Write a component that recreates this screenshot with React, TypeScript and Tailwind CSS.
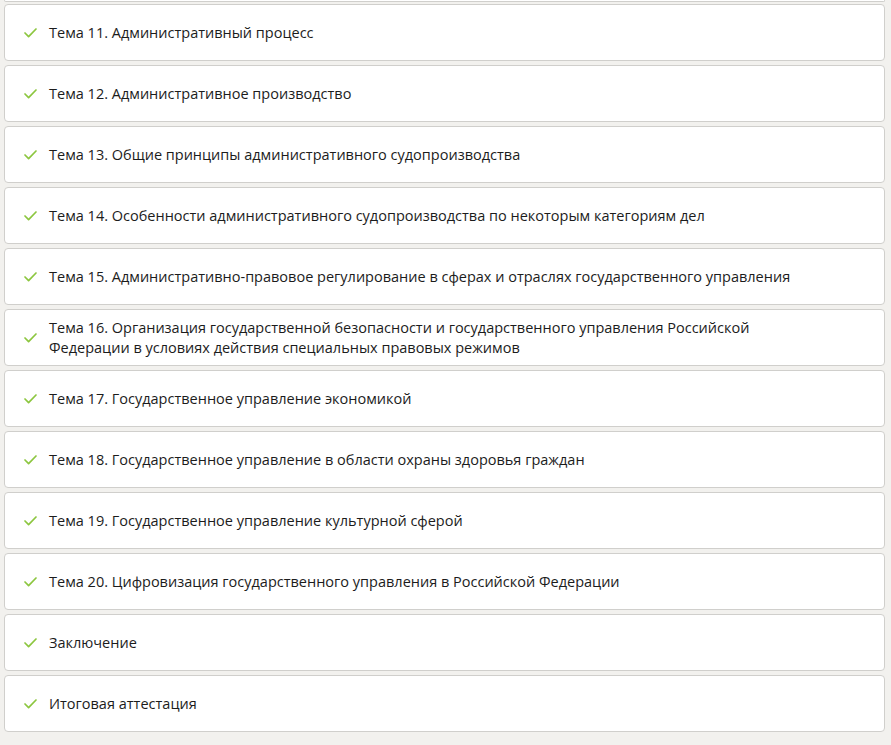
import React from "react";

const topics: string[] = [
  "Тема 11. Административный процесс",
  "Тема 12. Административное производство",
  "Тема 13. Общие принципы административного судопроизводства",
  "Тема 14. Особенности административного судопроизводства по некоторым категориям дел",
  "Тема 15. Административно-правовое регулирование в сферах и отраслях государственного управления",
  "Тема 16. Организация государственной безопасности и государственного управления Российской Федерации в условиях действия специальных правовых режимов",
  "Тема 17. Государственное управление экономикой",
  "Тема 18. Государственное управление в области охраны здоровья граждан",
  "Тема 19. Государственное управление культурной сферой",
  "Тема 20. Цифровизация государственного управления в Российской Федерации",
  "Заключение",
  "Итоговая аттестация",
];

const CheckIcon: React.FC = () => (
  <svg width="13" height="10" viewBox="0 0 13 10" fill="none" className="shrink-0">
    <path d="M1 5 L4.6 8.6 L12 1" stroke="#8cc63f" strokeWidth="1.7" strokeLinecap="round" strokeLinejoin="round" />
  </svg>
);

const App: React.FC = () => {
  return (
    <div className="min-h-screen bg-[#f2f1ee] pl-[4px] pr-[6px] pb-[14px]" style={{ fontFamily: '"Open Sans", "Noto Sans", sans-serif' }}>
      <div className="h-[2px] bg-white border border-t-0 border-[#d0cfcc] rounded-b-[4px]" />
      <div className="flex flex-col gap-[4px] pt-[2px]">
        {topics.map((title, idx) => (
          <div
            key={idx}
            className="h-[57px] bg-white border border-[#d0cfcc] rounded-[4px] flex items-center pl-[19px]"
          >
            <CheckIcon />
            <div className="ml-[12px] max-w-[750px] text-[14.5px] leading-[20px] text-[#1c1c1c]">{title}</div>
          </div>
        ))}
      </div>
    </div>
  );
};

export default App;
